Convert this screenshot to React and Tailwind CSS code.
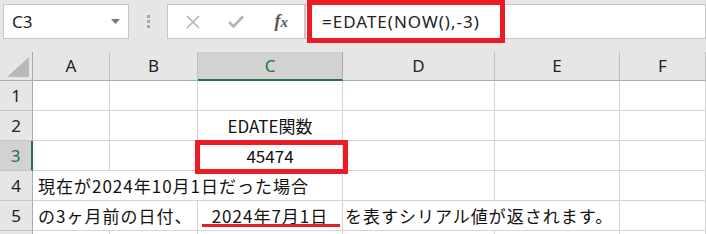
import React from 'react';

const cellFont = { fontFamily: '"Noto Sans CJK JP", "Noto Sans", sans-serif' };

const cols = ['A', 'B', 'C', 'D', 'E', 'F'];

const ColHeader = ({ label, selected }) => (
  <div
    className={
      'flex items-center justify-center text-[17px] border-r ' +
      (selected
        ? 'bg-[#d2d2d2] text-[#217346] border-r-[#ababab] border-b-2 border-b-[#217346]'
        : 'bg-[#e6e6e6] text-[#222] border-r-[#c0c0c0] border-b border-b-[#ababab]')
    }
  >
    {label}
  </div>
);

const RowHeader = ({ n, selected }) => (
  <div
    className={
      'flex items-center justify-center text-[17px] border-b border-b-[#c6c6c6] ' +
      (selected
        ? 'bg-[#d2d2d2] text-[#217346] border-r-2 border-r-[#217346]'
        : 'bg-[#e6e6e6] text-[#222] border-r border-r-[#ababab]')
    }
  >
    {n}
  </div>
);

const Cell = ({ children, className = '' }) => (
  <div className={'border-r border-b border-[#d4d4d4] bg-white flex items-center text-[16px] text-[#111] ' + className}>
    {children}
  </div>
);

const App = () => {
  return (
    <div
      className="w-[706px] h-[234px] bg-[#e6e6e6] overflow-hidden relative"
      style={{ fontFamily: '"Noto Sans", "Liberation Sans", sans-serif' }}
    >
      {/* formula bar */}
      <div className="flex items-start h-[52px] pt-[4px]">
        <div className="ml-[3px] w-[126px] h-[35px] bg-white border border-[#c6c6c6] flex items-center justify-between pl-[8px] pr-[8px]">
          <span className="text-[17px] text-[#222]">C3</span>
          <svg width="9" height="5" viewBox="0 0 9 5">
            <path d="M0 0 L9 0 L4.5 5 Z" fill="#777" />
          </svg>
        </div>
        <div className="w-[38px] h-[35px] flex flex-col items-center justify-center gap-[2px]">
          <div className="w-[3px] h-[3px] bg-[#a8a8a8]" />
          <div className="w-[3px] h-[3px] bg-[#a8a8a8]" />
          <div className="w-[3px] h-[3px] bg-[#a8a8a8]" />
        </div>
        <div className="w-[138px] h-[35px] bg-white border border-[#c6c6c6] flex items-center">
          <div className="w-[46px] flex justify-center pl-[4px]">
            <svg width="14" height="14" viewBox="0 0 14 14">
              <path d="M1 1 L13 13 M13 1 L1 13" stroke="#b4b4b4" strokeWidth="1.6" />
            </svg>
          </div>
          <div className="w-[46px] flex justify-center">
            <svg width="16" height="13" viewBox="0 0 16 13">
              <path d="M1 7 L5.5 11.5 L15 1.5" stroke="#b4b4b4" strokeWidth="2.6" fill="none" />
            </svg>
          </div>
          <div className="w-[46px] flex justify-center">
            <span
              className="italic text-[18px] text-[#555] font-bold"
              style={{ fontFamily: '"Liberation Serif", serif' }}
            >
              f<span className="text-[15px]">x</span>
            </span>
          </div>
        </div>
        <div className="flex-1 h-[35px] bg-white border border-[#c6c6c6] flex items-center pl-[16px]">
          <span className="text-[17px] text-[#222] tracking-[1px]">=EDATE(NOW(),-3)</span>
        </div>
      </div>

      {/* red box on formula */}
      <div className="absolute left-[307px] top-0 w-[198px] h-[43px] border-[5px] border-[#ec1c24]" />

      {/* grid */}
      <div className="relative grid grid-cols-[33px_77px_88px_145px_152px_125px_86px] grid-rows-[29px_30px_30px_30px_30px_30px_30px]">
        <div className="bg-[#e6e6e6] border-r border-r-[#ababab] border-b border-b-[#ababab] flex items-end justify-end pr-[3px] pb-[3px]">
          <svg width="22" height="20" viewBox="0 0 22 20">
            <path d="M22 0 L22 20 L0 20 Z" fill="#b9b9b9" />
          </svg>
        </div>
        {cols.map((c) => (
          <ColHeader key={c} label={c} selected={c === 'C'} />
        ))}

        <RowHeader n="1" />
        {cols.map((c) => (
          <Cell key={'1' + c} />
        ))}

        <RowHeader n="2" />
        <Cell />
        <Cell />
        <Cell className="justify-center" >
          <span style={cellFont} className="text-[17px]">EDATE関数</span>
        </Cell>
        <Cell />
        <Cell />
        <Cell />

        <RowHeader n="3" selected />
        <Cell />
        <Cell />
        <Cell className="justify-center relative">
          <span style={cellFont} className="text-[17px]">45474</span>
          <div className="absolute right-[-3px] bottom-[-3px] w-[5px] h-[5px] bg-[#217346] border border-white" />
        </Cell>
        <Cell />
        <Cell />
        <Cell />

        <RowHeader n="4" />
        <Cell className="col-span-3 pl-[5px]">
          <span style={cellFont} className="text-[17px] tracking-[1px] whitespace-nowrap">現在が2024年10月1日だった場合</span>
        </Cell>
        <Cell />
        <Cell />
        <Cell />

        <RowHeader n="5" />
        <Cell className="col-span-2 pl-[5px]">
          <span style={cellFont} className="text-[17px] tracking-[1px] whitespace-nowrap">の3ヶ月前の日付、</span>
        </Cell>
        <Cell className="justify-center">
          <span style={cellFont} className="text-[17px] tracking-[1px] whitespace-nowrap">2024年7月1日</span>
        </Cell>
        <Cell className="col-span-2 pl-[2px]">
          <span style={cellFont} className="text-[17px] tracking-[1px] whitespace-nowrap">を表すシリアル値が返されます。</span>
        </Cell>
        <Cell />

        <RowHeader n="" />
        {cols.map((c) => (
          <Cell key={'6' + c} />
        ))}

        {/* annotations */}
        <div className="absolute left-[195px] top-[88px] w-[153px] h-[34px] border-[5px] border-[#ec1c24]" />
        <div className="absolute left-[202px] top-[172px] w-[138px] h-[3px] bg-[#e0202a]" />
      </div>
    </div>
  );
};

export default App;
